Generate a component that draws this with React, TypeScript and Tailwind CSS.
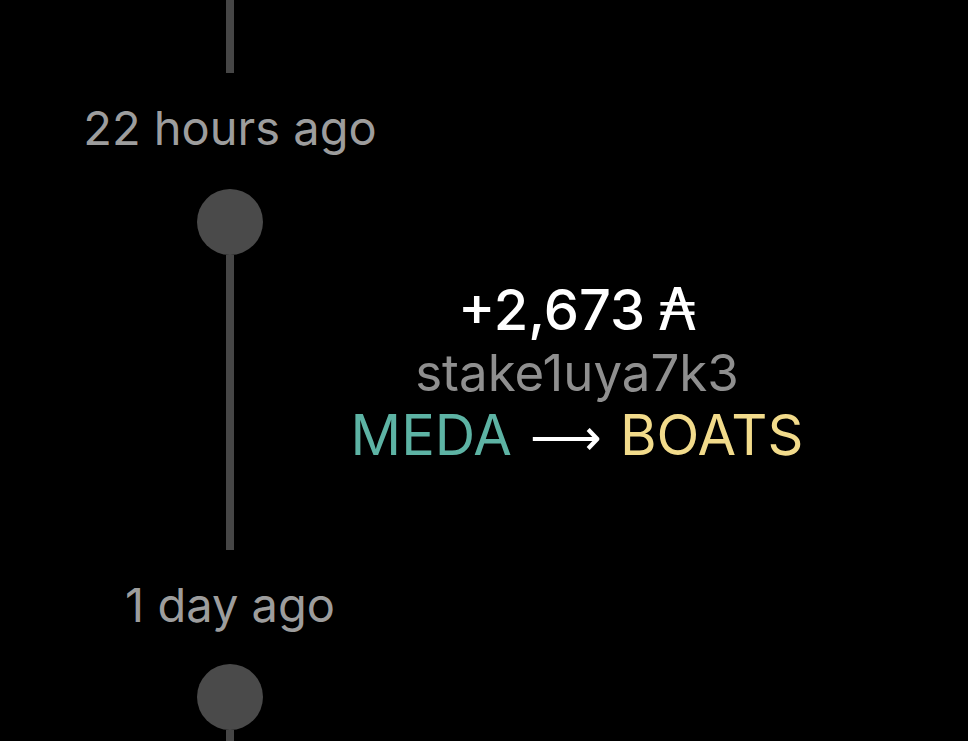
import React from "react";

const Line = ({ h }: { h: string }) => (
  <div className={`w-2 bg-[#464646] ${h}`} />
);

const App = () => {
  return (
    <div className="h-[741px] w-[968px] overflow-hidden bg-black font-['Inter','Noto_Sans',sans-serif]">
      {/* top segment */}
      <div className="flex w-[460px] justify-center">
        <div className="h-[73px] w-2 bg-[#464646]" />
      </div>

      <div className="flex h-[116px] w-[460px] justify-center pt-[31px]">
        <span className="text-[47px] leading-none text-[#9d9d9d]">22 hours ago</span>
      </div>

      <div className="flex w-[460px] justify-center">
        <div className="h-[66px] w-[66px] rounded-full bg-[#4a4a4a]" />
      </div>

      <div className="flex h-[295px]">
        <div className="w-[226px] shrink-0" />
        <div className="h-full w-2 bg-[#464646]" />
        <div className="mr-12 flex flex-1 flex-col items-center pt-[25px]">
          <div className="flex items-baseline text-[56px] font-medium leading-[61px] text-white">
            <span>+2,673</span>
            <span className="ml-[14px] font-['DejaVu_Sans',sans-serif] text-[58px] font-normal">₳</span>
          </div>
          <div className="text-[51px] leading-[64px] text-[#8f8f8f]">stake1uya7k3</div>
          <div className="flex items-baseline text-[56px] leading-[61px]">
            <span className="text-[#5db3a4]">MEDA</span>
            <span className="mx-[18px] font-['DejaVu_Sans',sans-serif] text-[50px] font-light text-white">⟶</span>
            <span className="text-[#f2db8b]">BOATS</span>
          </div>
        </div>
      </div>

      <div className="flex h-[114px] w-[460px] justify-center pt-[31px]">
        <span className="text-[47px] leading-none text-[#9d9d9d]">1 day ago</span>
      </div>

      <div className="flex w-[460px] flex-col items-center">
        <div className="h-[66px] w-[66px] rounded-full bg-[#4a4a4a]" />
        <Line h="h-[40px]" />
      </div>
    </div>
  );
};

export default App;
